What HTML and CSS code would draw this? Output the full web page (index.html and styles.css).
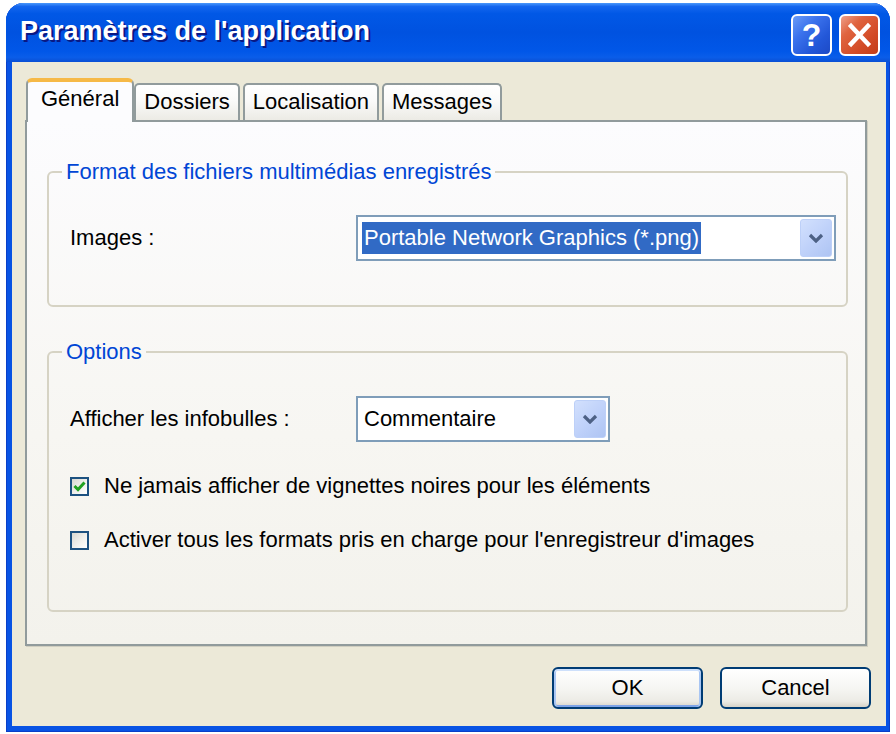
FILE: index.html
```
<!DOCTYPE html>
<html lang="fr">
<head>
<meta charset="utf-8">
<title>Paramètres de l'application</title>
<link rel="stylesheet" href="styles.css">
</head>
<body>
<div class="window">
  <div class="titlebar">
    <span class="title">Paramètres de l'application</span>
    <div class="caption-buttons">
      <div class="cap help">?</div>
      <div class="cap close">
        <svg width="37" height="38" viewBox="0 0 37 38"><path d="M10 10 L27 28 M27 10 L10 28" stroke="#fff" stroke-width="4.5" stroke-linecap="square" fill="none"/></svg>
      </div>
    </div>
  </div>
  <div class="client">
    <div class="tabs">
      <div class="tab active">Général</div>
      <div class="tab">Dossiers</div>
      <div class="tab">Localisation</div>
      <div class="tab">Messages</div>
    </div>
    <div class="panel">
      <fieldset class="group first">
        <legend>Format des fichiers multimédias enregistrés</legend>
        <div class="row">
          <span class="label">Images :</span>
          <div class="combo wide">
            <span class="value"><span class="selected">Portable Network Graphics (*.png)</span></span>
            <span class="drop"><svg width="16" height="10" viewBox="0 0 16 10"><path d="M2 2 L8 8 L14 2" stroke="#4d6185" stroke-width="3.2" fill="none"/></svg></span>
          </div>
        </div>
      </fieldset>
      <fieldset class="group second">
        <legend>Options</legend>
        <div class="row">
          <span class="label">Afficher les infobulles :</span>
          <div class="combo narrow">
            <span class="value"><span class="plain">Commentaire</span></span>
            <span class="drop"><svg width="16" height="10" viewBox="0 0 16 10"><path d="M2 2 L8 8 L14 2" stroke="#4d6185" stroke-width="3.2" fill="none"/></svg></span>
          </div>
        </div>
        <div class="check-row first-check">
          <span class="box"><svg width="15" height="15" viewBox="0 0 15 15"><path d="M2.5 7 L6 10.5 L12.5 3.5" stroke="#21a121" stroke-width="3" fill="none"/></svg></span>
          <span class="check-label">Ne jamais afficher de vignettes noires pour les éléments</span>
        </div>
        <div class="check-row second-check">
          <span class="box"></span>
          <span class="check-label">Activer tous les formats pris en charge pour l'enregistreur d'images</span>
        </div>
      </fieldset>
    </div>
    <div class="buttons">
      <div class="btn default">OK</div>
      <div class="btn">Cancel</div>
    </div>
  </div>
</div>
</body>
</html>
```
FILE: styles.css
```
html, body {
  margin: 0;
  padding: 0;
  background: #ffffff;
  overflow: hidden;
}

body {
  font-family: "Liberation Sans", Arial, sans-serif;
  font-size: 22px;
  color: #000;
}

.window {
  width: 884px;
  height: 729px;
  margin: 3px 0 0 6px;
  box-sizing: border-box;
  display: flex;
  flex-direction: column;
  background: #0853e4;
  border-radius: 18px 18px 0 0;
  overflow: hidden;
  box-shadow: inset 1px 0 0 #0a3fc8, inset -1px 0 0 #0a3fc8, inset 0 -1px 0 #0a3fc8;
}

.titlebar {
  height: 59px;
  flex: none;
  display: flex;
  align-items: center;
  padding: 0 10px 0 14px;
  background: linear-gradient(#4a98fb 0, #1466ee 6%, #0158e6 18%, #0052e0 50%, #0157e8 82%, #0a5de9 92%, #0a4fd4 100%);
}

.title {
  color: #fff;
  font-weight: bold;
  font-size: 27px;
  text-shadow: 2px 2px 0 #0a1883;
  margin-top: -3px;
}

.caption-buttons {
  margin-left: auto;
  display: flex;
  gap: 7px;
  margin-top: 5px;
}

.cap {
  width: 41px;
  height: 42px;
  box-sizing: border-box;
  border: 2px solid #fff;
  border-radius: 6px;
  display: flex;
  align-items: center;
  justify-content: center;
}

.help {
  background: linear-gradient(135deg, #6a9cf8 0%, #3b72ec 35%, #2357d8 70%, #1d4ac6 100%);
  color: #fff;
  font-family: "Liberation Sans", Arial, sans-serif;
  font-weight: bold;
  font-size: 32px;
  line-height: 38px;
}

.close {
  background: linear-gradient(135deg, #eea08a 0%, #e0643f 30%, #d24a25 70%, #c23d19 100%);
}

.client {
  flex: 1;
  margin: 0 4px 6px 6px;
  background: #ece9d8;
  padding: 16px 15px 0 13px;
  display: flex;
  flex-direction: column;
}

.tabs {
  display: flex;
  align-items: flex-end;
  height: 42px;
  padding-left: 1px;
  position: relative;
  z-index: 1;
}

.tab {
  height: 37px;
  box-sizing: border-box;
  border: 2px solid #919b9c;
  border-bottom: none;
  border-radius: 5px 5px 0 0;
  background: linear-gradient(#ffffff, #fafaf9 45%, #ecebe5);
  padding: 0 8px;
  line-height: 34px;
  margin-right: 3px;
  white-space: nowrap;
}

.tab.active {
  height: 44px;
  margin-bottom: -2px;
  margin-right: 0;
  padding: 0 13px;
  line-height: 33px;
  background: #fcfcfe;
  border-top: 4px solid #f6b947;
  border-radius: 6px 6px 0 0;
}

.panel {
  margin-right: 4px;
  border: 2px solid #919b9c;
  background: linear-gradient(#fcfcfe, #f7f6f2 60%, #f3f2ec);
  padding: 37px 17px 32px 20px;
  box-shadow: 1px 1px 0 #d0cec0;
}

.group {
  margin: 0;
  border: 2px solid #d6d3c4;
  border-radius: 6px;
  min-width: 0;
}

.group legend {
  color: #0046d5;
  line-height: 26px;
  padding: 0 4px;
  margin-left: -8px;
}

.group.first {
  padding: 30px 0 44px 21px;
}

.group.second {
  margin-top: 32px;
  padding: 31px 0 57px 21px;
}

.row {
  display: flex;
  align-items: center;
}

.label {
  width: 286px;
  flex: none;
}

.combo {
  height: 46px;
  box-sizing: border-box;
  border: 2px solid #7f9db9;
  background: #fff;
  display: flex;
  align-items: center;
  padding: 0 2px 0 4px;
}

.combo.wide {
  width: 480px;
}

.combo.narrow {
  width: 254px;
}

.value {
  flex: 1;
  white-space: nowrap;
}

.selected {
  display: inline-block;
  background: #316ac5;
  color: #fff;
  line-height: 32px;
  padding: 0 2px;
}

.plain {
  display: inline-block;
  line-height: 32px;
  padding: 0 2px;
}

.drop {
  width: 32px;
  height: 38px;
  box-sizing: border-box;
  border: 1px solid #bdd0f8;
  border-radius: 3px;
  background: linear-gradient(135deg, #d2e0fd 0%, #c0d2fa 50%, #aec4f3 100%);
  display: flex;
  align-items: center;
  justify-content: center;
}

.check-row {
  display: flex;
  align-items: center;
  height: 26px;
}

.first-check {
  margin-top: 31px;
}

.second-check {
  margin-top: 28px;
}

.box {
  width: 19px;
  height: 19px;
  box-sizing: border-box;
  border: 2px solid #1c5180;
  background: linear-gradient(135deg, #d8d8d2 0%, #eeeeea 50%, #ffffff 100%);
  margin-right: 15px;
  display: flex;
  align-items: center;
  justify-content: center;
  flex: none;
}

.check-label {
  white-space: nowrap;
}

.buttons {
  display: flex;
  justify-content: flex-end;
  gap: 17px;
  margin-top: 21px;
}

.btn {
  width: 151px;
  height: 42px;
  box-sizing: border-box;
  border: 2px solid #003c74;
  border-radius: 6px;
  background: linear-gradient(#ffffff 0%, #f6f6f3 50%, #ecebe5 85%, #d8d3c8 100%);
  display: flex;
  align-items: center;
  justify-content: center;
}

.btn.default {
  box-shadow: inset 0 2px 0 #cee0fb, inset 2px 0 0 #a9c6f3, inset -2px 0 0 #a9c6f3, inset 0 -2px 0 #7ea4e8;
}
```
